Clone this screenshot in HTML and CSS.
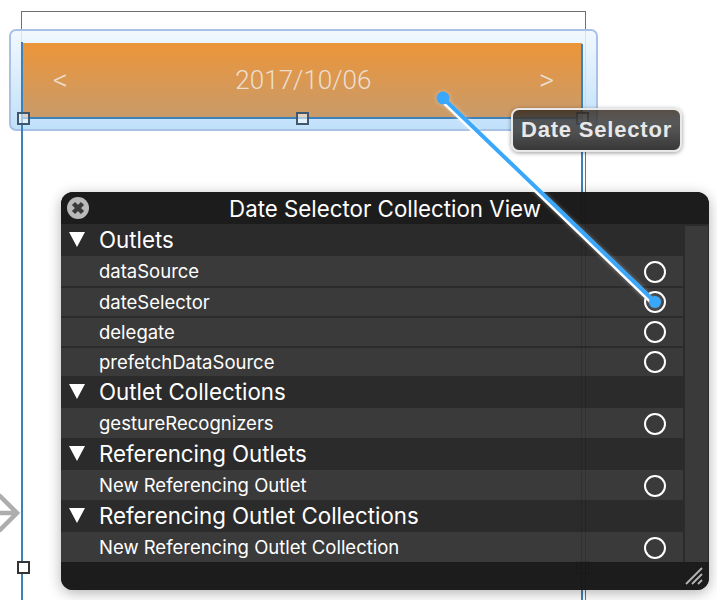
FILE: index.html
```html
<!DOCTYPE html>
<html lang="en">
<head>
    <meta charset="UTF-8">
    <meta name="viewport" content="width=device-width, initial-scale=1.0">
    <title>Date Selector Collection View</title>
    <link rel="stylesheet" href="styles.css">
</head>
<body>
    <div class="canvas">
        <div class="scene-frame"></div>

        <div class="selection">
            <div class="date-bar">
                <span class="date-arrow">&lt;</span>
                <span class="date-label">2017/10/06</span>
                <span class="date-arrow">&gt;</span>
            </div>
        </div>
        <div class="guide guide-left"></div>
        <div class="guide guide-right"></div>
        <span class="handle handle-left"></span>
        <span class="handle handle-middle"></span>
        <span class="handle handle-right"></span>
        <span class="handle handle-bottom"></span>

        <svg class="entry-arrow" width="24" height="40" viewBox="0 0 24 40">
            <path d="M0 20H16M-1 2L17 20L-1 38" fill="none" stroke="#adadad" stroke-width="4.500"/>
        </svg>

        <div class="panel">
            <div class="panel-title">
                <svg class="panel-close" width="22" height="22" viewBox="0 0 22 22">
                    <circle cx="11" cy="11" r="11" fill="#b9b9b9"/>
                    <path d="M6.500 6.500L15.500 15.500M15.500 6.500L6.500 15.500" stroke="#3a3a3a" stroke-width="4.500"/>
                </svg>
                Date Selector Collection View
            </div>
            <div class="panel-body">
                <div class="outlet-list">
                    <div class="group-head"><i class="disclosure"></i>Outlets</div>
                    <div class="outlet first">dataSource<span class="port"></span></div>
                    <div class="outlet">dateSelector<span class="port"></span></div>
                    <div class="outlet">delegate<span class="port"></span></div>
                    <div class="outlet">prefetchDataSource<span class="port"></span></div>
                    <div class="group-head"><i class="disclosure"></i>Outlet Collections</div>
                    <div class="outlet first">gestureRecognizers<span class="port"></span></div>
                    <div class="group-head"><i class="disclosure"></i>Referencing Outlets</div>
                    <div class="outlet first">New Referencing Outlet<span class="port"></span></div>
                    <div class="group-head"><i class="disclosure"></i>Referencing Outlet Collections</div>
                    <div class="outlet first">New Referencing Outlet Collection<span class="port"></span></div>
                </div>
                <div class="panel-scroll"></div>
            </div>
            <div class="panel-foot">
                <svg width="20" height="20" viewBox="0 0 20 20">
                    <path d="M2 18L18 2M8 18L18 8M14 18L18 14" stroke="#b4b4b4" stroke-width="1.800"/>
                </svg>
            </div>
        </div>

        <div class="ghost ghost-line"></div>
        <div class="ghost ghost-handle"></div>

        <svg class="connection" width="717" height="600" viewBox="0 0 717 600">
            <path d="M442 99L654 303" fill="none" stroke="#fff" stroke-width="6"/>
            <path d="M443 98L655 302" fill="none" stroke="#39a7fb" stroke-width="4"/>
            <circle cx="443" cy="98" r="6.500" fill="#39a7fb"/>
            <circle cx="655" cy="302" r="6" fill="#39a7fb"/>
        </svg>

        <div class="tooltip">Date Selector</div>
    </div>
</body>
</html>
```

FILE: styles.css
```css
* {
    box-sizing: border-box;
}

html, body {
    margin: 0;
    background: #fff;
}

.canvas {
    position: relative;
    width: 717px;
    height: 600px;
    overflow: hidden;
    font-family: Inter, "Liberation Sans", sans-serif;
}

.scene-frame {
    position: absolute;
    left: 21px;
    top: 11px;
    width: 565px;
    height: 620px;
    border: 1px solid #6f6f6f;
}

.guide {
    position: absolute;
    bottom: 0;
    width: 2px;
    background: #3d81ba;
}

.guide-left {
    left: 21px;
    top: 42px;
}

.guide-right {
    left: 581px;
    top: 44px;
}

.selection {
    position: absolute;
    left: 9px;
    top: 29px;
    width: 589px;
    height: 102px;
    padding: 12px 14px 11px 12px;
    border: 2px solid #a9c1e4;
    border-radius: 7px;
    background: linear-gradient(rgba(239, 247, 253, 0.85), rgba(189, 222, 250, 0.95));
}

.date-bar {
    display: flex;
    align-items: center;
    justify-content: space-between;
    height: 76px;
    padding: 0 28px 0 30px;
    border-bottom: 2px solid #3d81ba;
    background: linear-gradient(#ec9539, #c99b6a);
    color: #ecdfd0;
}

.date-label {
    font-family: Roboto, sans-serif;
    font-size: 26px;
    font-weight: 300;
}

.date-arrow {
    font-family: Roboto, sans-serif;
    font-size: 29px;
    font-weight: 300;
}

.handle {
    position: absolute;
    width: 13px;
    height: 13px;
    border: 2px solid #3f5870;
    background: rgba(255, 255, 255, 0.55);
}

.handle-left {
    left: 17px;
    top: 112px;
}

.handle-middle {
    left: 296px;
    top: 112px;
}

.handle-right {
    left: 576px;
    top: 112px;
}

.handle-bottom {
    left: 17px;
    top: 561px;
    border-color: #333;
    background: #fff;
}

.entry-arrow {
    position: absolute;
    left: 0;
    top: 493px;
}

.panel {
    position: absolute;
    left: 61px;
    top: 192px;
    display: flex;
    flex-direction: column;
    width: 648px;
    height: 398px;
    overflow: hidden;
    border-radius: 12px;
    background: #2b2b2b;
    box-shadow: 0 3px 14px rgba(0, 0, 0, 0.3);
    color: #fff;
}

.panel-title {
    position: relative;
    flex: none;
    height: 32px;
    background: #1c1c1c;
    font-size: 22.300px;
    line-height: 33px;
    text-align: center;
}

.panel-close {
    position: absolute;
    left: 6px;
    top: 5px;
}

.panel-body {
    display: flex;
    flex: none;
}

.outlet-list {
    flex: none;
    width: 622px;
}

.group-head {
    display: flex;
    align-items: center;
    height: 32px;
    padding: 0 0 2px 38px;
    font-size: 22.300px;
}

.disclosure {
    position: absolute;
    left: 8px;
    width: 0;
    height: 0;
    border-top: 15px solid #fff;
    border-left: 8px solid transparent;
    border-right: 8px solid transparent;
}

.outlet {
    display: flex;
    align-items: center;
    justify-content: space-between;
    height: 28px;
    margin-top: 2px;
    padding: 0 17px 0 38px;
    background: #3a3a3a;
    font-size: 18.500px;
}

.outlet.first {
    height: 30px;
    margin-top: 0;
}

.outlet.first .port {
    margin-top: 2px;
}

.port {
    width: 22px;
    height: 22px;
    border: 2px solid #fff;
    border-radius: 50%;
}

.panel-scroll {
    flex: none;
    width: 23px;
    margin: 2px 0 0 2px;
    background: #3a3a3a;
}

.panel-foot {
    display: flex;
    flex: 1;
    align-items: flex-end;
    justify-content: flex-end;
    padding: 0 5px 4px 0;
    background: #1c1c1c;
}

.ghost {
    position: absolute;
    border: 1px solid rgba(0, 0, 0, 0.12);
}

.ghost-line {
    left: 581px;
    top: 192px;
    width: 5px;
    height: 398px;
    border-width: 0 1px;
}

.ghost-handle {
    left: 576px;
    top: 561px;
    width: 13px;
    height: 13px;
}

.connection {
    position: absolute;
    left: 0;
    top: 0;
    filter: drop-shadow(0 0 2px rgba(255, 255, 255, 0.35));
}

.tooltip {
    position: absolute;
    left: 511px;
    top: 108px;
    width: 171px;
    height: 44px;
    border: 2px solid #e8e8e8;
    border-radius: 8px;
    background: linear-gradient(rgba(45, 35, 25, 0.8), rgba(65, 65, 65, 0.88) 30%, #505050 55%, #383838);
    box-shadow: 0 1px 4px rgba(0, 0, 0, 0.4);
    color: #e8e8e8;
    font-family: "Liberation Sans", sans-serif;
    font-size: 22px;
    font-weight: 700;
    letter-spacing: 0.8px;
    line-height: 40px;
    text-align: center;
}
```
